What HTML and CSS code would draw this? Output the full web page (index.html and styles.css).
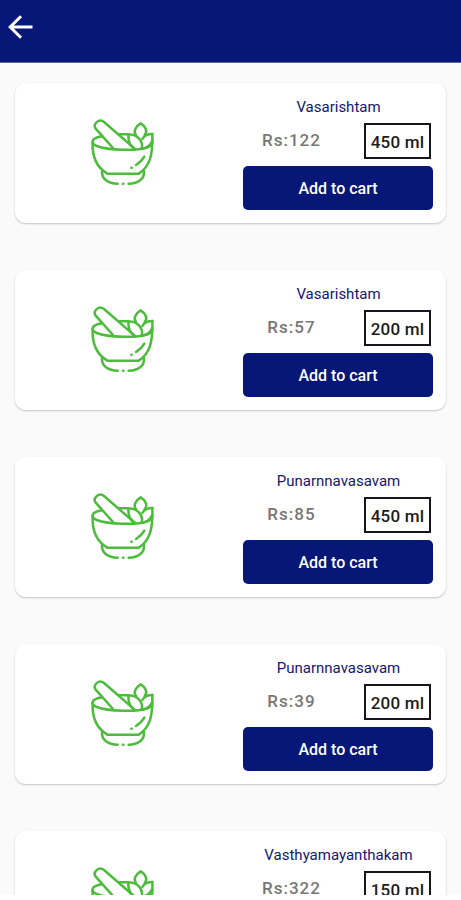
FILE: index.html
```
<!DOCTYPE html>
<html lang="en">
<head>
<meta charset="utf-8">
<title>Products</title>
<link rel="stylesheet" href="styles.css">
</head>
<body>
<svg class="defs" width="0" height="0" aria-hidden="true">
  <symbol id="mortar" viewBox="0 0 270 255">
    <g fill="none" stroke="#4dbb3c" stroke-width="7.5" stroke-linecap="round" stroke-linejoin="round">
      <path d="M99 114 L47 56 C37 42 57 24 72 36 L164 116"/>
      <path d="M66 79 C34 84 29 99 50 108 C85 122 172 123 203 112 Q214 108 217 98"/>
      <path d="M38 96 C36 136 46 170 82 191 H176 C209 170 219 137 217 72"/>
      <path d="M119 73 H145 M145 73 C172 74 191 91 185 117 M145 73 C144 94 150 108 164 117"/>
      <path d="M168 76 C159 64 167 49 182 40 C197 49 204 64 194 76"/>
      <path d="M217 72 C203 72 193 76 187 87 M217 92 Q210 110 190 116"/>
      <path d="M193 140 Q184 156 168 165 M154 173 L155 173"/>
      <path d="M66 183 C64 207 84 220 113 221 M129 221 H130 M146 221 C175 220 194 207 192 183"/>
    </g>
  </symbol>
</svg>
<div class="screen">
  <header class="bar">
    <svg class="back" viewBox="0 0 26 26"><path d="M24.500 13H2.500M13 2.200L2.200 13L13 23.800"/></svg>
  </header>
  <main class="list">
    <article class="card">
      <svg class="icon"><use href="#mortar"/></svg>
      <div class="info">
        <h2>Vasarishtam</h2>
        <div class="row"><span class="price">Rs:122</span><span class="size">450 ml</span></div>
        <button>Add to cart</button>
      </div>
    </article>
    <article class="card">
      <svg class="icon"><use href="#mortar"/></svg>
      <div class="info">
        <h2>Vasarishtam</h2>
        <div class="row"><span class="price">Rs:57</span><span class="size">200 ml</span></div>
        <button>Add to cart</button>
      </div>
    </article>
    <article class="card">
      <svg class="icon"><use href="#mortar"/></svg>
      <div class="info">
        <h2>Punarnnavasavam</h2>
        <div class="row"><span class="price">Rs:85</span><span class="size">450 ml</span></div>
        <button>Add to cart</button>
      </div>
    </article>
    <article class="card">
      <svg class="icon"><use href="#mortar"/></svg>
      <div class="info">
        <h2>Punarnnavasavam</h2>
        <div class="row"><span class="price">Rs:39</span><span class="size">200 ml</span></div>
        <button>Add to cart</button>
      </div>
    </article>
    <article class="card">
      <svg class="icon"><use href="#mortar"/></svg>
      <div class="info">
        <h2>Vasthyamayanthakam</h2>
        <div class="row"><span class="price">Rs:322</span><span class="size">150 ml</span></div>
        <button>Add to cart</button>
      </div>
    </article>
  </main>
</div>
</body>
</html>
```
FILE: styles.css
```
* { box-sizing: border-box; }
body {
  margin: 0;
  height: 900px;
  overflow: hidden;
  background: #fff;
  font-family: Roboto, sans-serif;
}
.defs { display: block; }
.screen {
  height: 895px;
  overflow: hidden;
  background: #fafafa;
}
.bar {
  height: 63px;
  padding: 14px 0 0 8px;
  background: #061778;
  border-bottom: 1px solid #5a64a2;
}
.back {
  display: block;
  width: 26px;
  height: 26px;
  fill: none;
  stroke: #fff;
  stroke-width: 3;
}
.list {
  display: flex;
  flex-direction: column;
  gap: 46.900px;
  padding: 20px 15px 0 15px;
}
.card {
  display: flex;
  flex: none;
  justify-content: space-between;
  height: 140px;
  padding: 0 13px 0 65px;
  border-radius: 11px;
  background: #fff;
  box-shadow: 0 1px 2px rgba(0, 0, 0, .22);
}
.icon {
  width: 90px;
  height: 85px;
  margin-top: 27px;
}
.info { width: 190px; }
h2 {
  margin: 15px 0 0 1px;
  font-size: 15px;
  line-height: 18px;
  font-weight: 400;
  text-align: center;
  color: #14176f;
}
.row {
  display: flex;
  justify-content: space-between;
  height: 36px;
  margin: 7px 2px 7px 0;
}
.price {
  width: 97px;
  line-height: 35px;
  font-size: 17px;
  font-weight: 500;
  letter-spacing: 1px;
  text-align: center;
  color: #777;
}
.size {
  width: 67px;
  border: 2px solid #17151d;
  line-height: 34px;
  font-size: 17px;
  font-weight: 500;
  letter-spacing: .2px;
  text-align: center;
  white-space: nowrap;
  color: #1c1c1c;
}
button {
  display: block;
  width: 190px;
  height: 44px;
  padding: 1px 0 0;
  border: 0;
  border-radius: 5px;
  background: #061778;
  font: 500 16px/44px Roboto, sans-serif;
  color: #fff;
}
```
